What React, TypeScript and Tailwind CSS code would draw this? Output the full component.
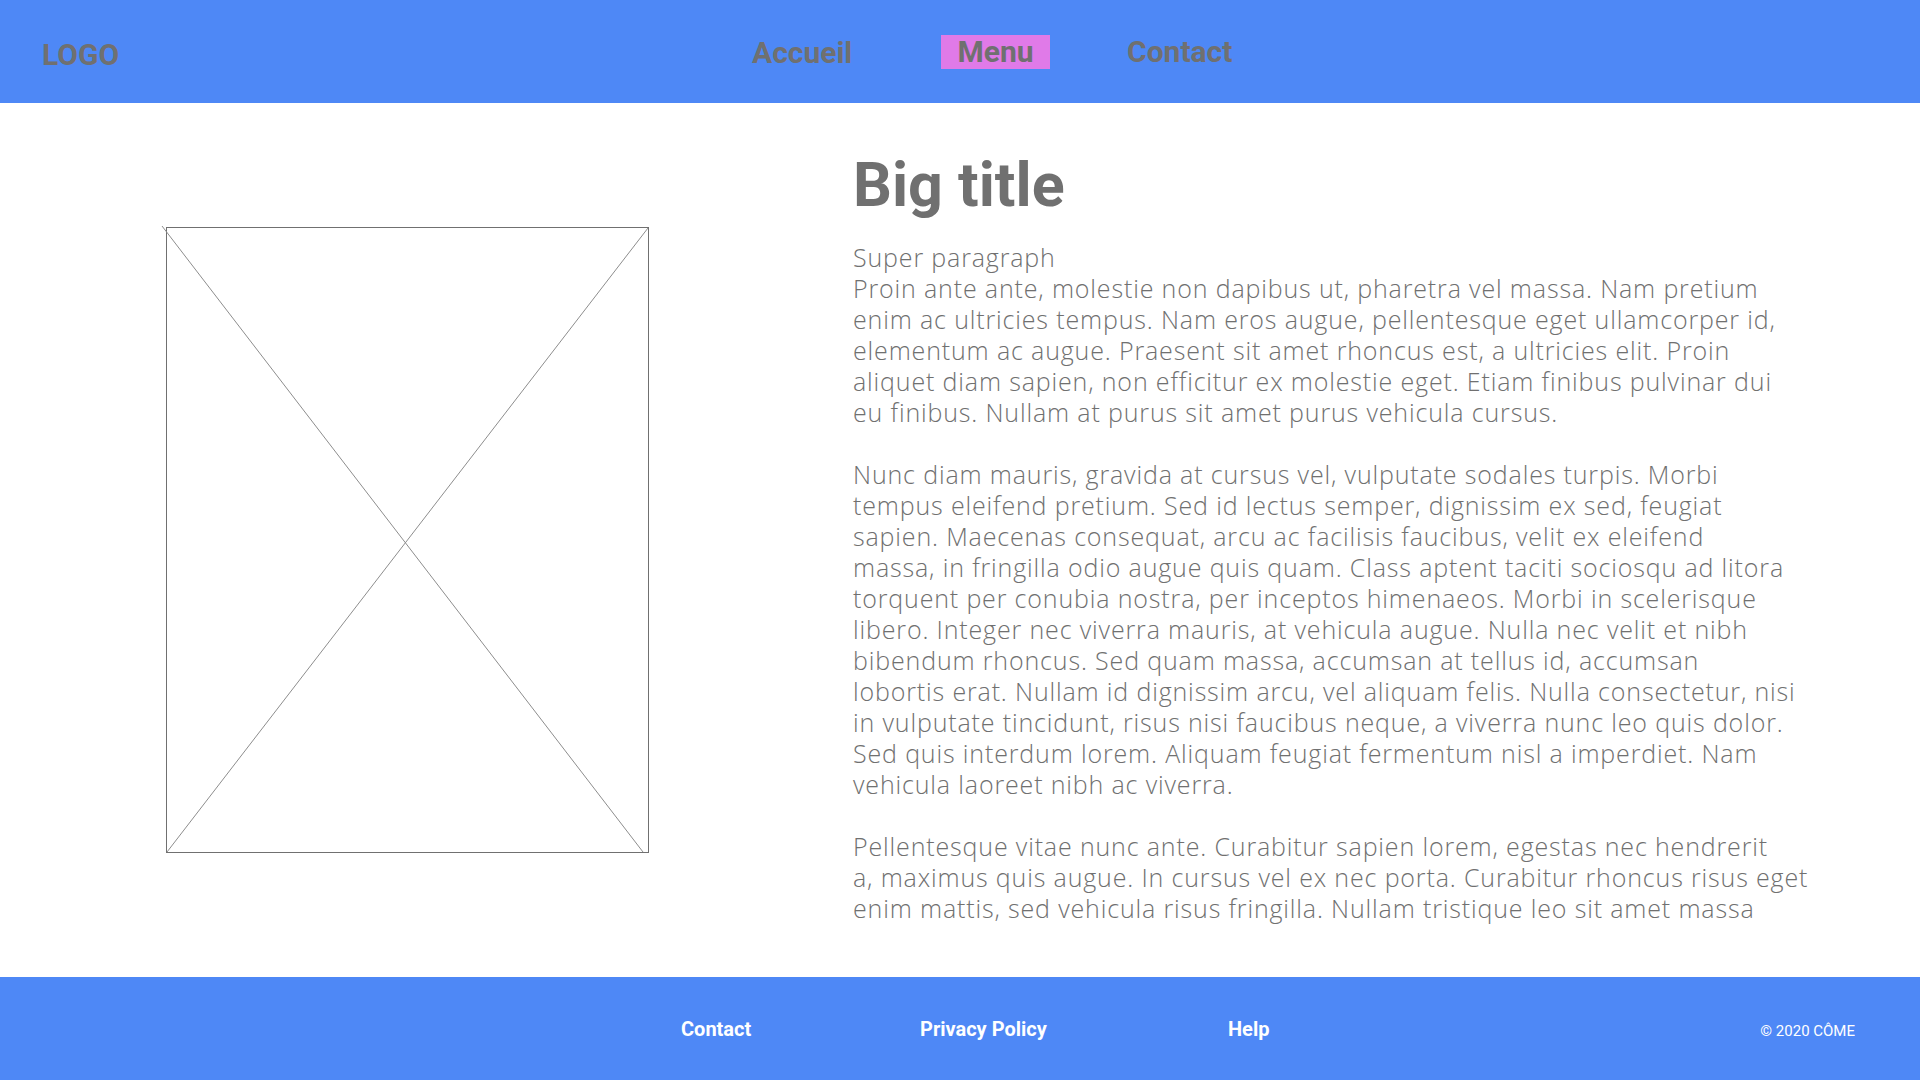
import React from 'react'

const roboto = { fontFamily: 'Roboto, "Liberation Sans", sans-serif' }

const paragraphs: string[][] = [
    [
        'Super paragraph',
        'Proin ante ante, molestie non dapibus ut, pharetra vel massa. Nam pretium',
        'enim ac ultricies tempus. Nam eros augue, pellentesque eget ullamcorper id,',
        'elementum ac augue. Praesent sit amet rhoncus est, a ultricies elit. Proin',
        'aliquet diam sapien, non efficitur ex molestie eget. Etiam finibus pulvinar dui',
        'eu finibus. Nullam at purus sit amet purus vehicula cursus.',
    ],
    [
        'Nunc diam mauris, gravida at cursus vel, vulputate sodales turpis. Morbi',
        'tempus eleifend pretium. Sed id lectus semper, dignissim ex sed, feugiat',
        'sapien. Maecenas consequat, arcu ac facilisis faucibus, velit ex eleifend',
        'massa, in fringilla odio augue quis quam. Class aptent taciti sociosqu ad litora',
        'torquent per conubia nostra, per inceptos himenaeos. Morbi in scelerisque',
        'libero. Integer nec viverra mauris, at vehicula augue. Nulla nec velit et nibh',
        'bibendum rhoncus. Sed quam massa, accumsan at tellus id, accumsan',
        'lobortis erat. Nullam id dignissim arcu, vel aliquam felis. Nulla consectetur, nisi',
        'in vulputate tincidunt, risus nisi faucibus neque, a viverra nunc leo quis dolor.',
        'Sed quis interdum lorem. Aliquam feugiat fermentum nisl a imperdiet. Nam',
        'vehicula laoreet nibh ac viverra.',
    ],
    [
        'Pellentesque vitae nunc ante. Curabitur sapien lorem, egestas nec hendrerit',
        'a, maximus quis augue. In cursus vel ex nec porta. Curabitur rhoncus risus eget',
        'enim mattis, sed vehicula risus fringilla. Nullam tristique leo sit amet massa',
    ],
]

function Placeholder() {
    return (
        <svg width="483" height="626" viewBox="0 0 483 626" className="shrink-0 overflow-visible">
            <rect x="0.5" y="0.5" width="482" height="625" fill="none" stroke="#707070" strokeWidth="1" />
            <line x1="-4" y1="-1" x2="477" y2="625" stroke="#8d8d8d" strokeWidth="1" />
            <line x1="482" y1="1" x2="1" y2="625" stroke="#8d8d8d" strokeWidth="1" />
        </svg>
    )
}

export default function App() {
    return (
        <div className="w-[1920px] h-[1080px] flex flex-col bg-white overflow-hidden">
            {/* header */}
            <header className="h-[103px] shrink-0 bg-[#4e88f6] flex items-center pl-[42px] text-[#707070] font-bold text-[30px]" style={roboto}>
                <div className="w-[710px] mt-[6px] leading-none">LOGO</div>
                <div className="w-[189px] mt-[2px] leading-none">Accueil</div>
                <div className="w-[109px] h-[34px] bg-[#e07ae8] text-center leading-[34px]">Menu</div>
                <div className="ml-[77px] leading-none">Contact</div>
            </header>

            {/* main */}
            <main className="flex-1 flex items-center pl-[166px]">
                <Placeholder />
                <div className="ml-[204px] -mt-[7px] flex flex-col text-[#707070]">
                    <h1 className="text-[61px] leading-[70px] font-bold" style={roboto}>Big title</h1>
                    <div className="mt-[22px] text-[25px] leading-[31px] tracking-[0.85px] font-light whitespace-nowrap"
                        style={{ fontFamily: '"Open Sans", "DejaVu Sans", sans-serif' }}>
                        {paragraphs.map((lines, i) => (
                            <p key={i} className={i > 0 ? 'mt-[31px]' : ''}>
                                {lines.map((l, j) => <span key={j} className="block">{l}</span>)}
                            </p>
                        ))}
                    </div>
                </div>
            </main>

            {/* footer */}
            <footer className="h-[103px] shrink-0 bg-[#4e88f6] flex items-center pl-[681px] pr-[65px] text-white" style={roboto}>
                <a className="w-[239px] text-[20px] font-bold">Contact</a>
                <a className="w-[308px] text-[20px] font-bold">Privacy Policy</a>
                <a className="text-[20px] font-bold">Help</a>
                <span className="ml-auto mt-[6px] text-[15px]">© 2020 CÔME</span>
            </footer>
        </div>
    )
}
